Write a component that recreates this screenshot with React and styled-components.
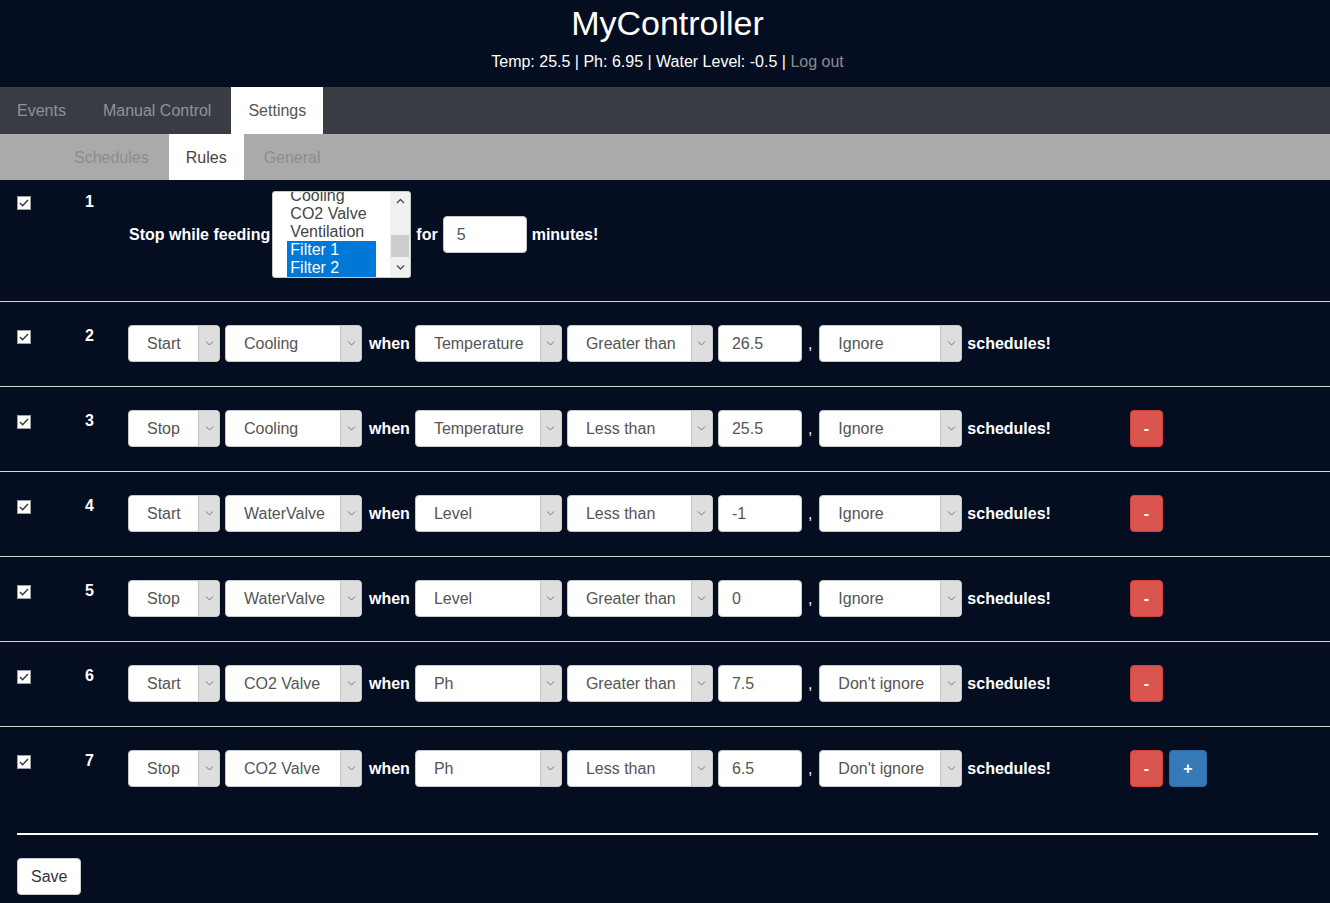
import styled, { createGlobalStyle } from "styled-components";

const GlobalStyle = createGlobalStyle`
  body {
    margin: 0;
    background: #050d21;
    font-family: "Liberation Sans", Arial, sans-serif;
    font-size: 16px;
    color: #fff;
  }
`;

const Header = styled.header`
  padding: 4px 0 14px 5px;
  text-align: center;
`;

const Title = styled.h1`
  margin: 0;
  font-size: 34px;
  font-weight: 400;
  line-height: 38px;
`;

const Status = styled.p`
  margin: 9px 0 0;
  line-height: 22px;
`;

const LogOut = styled.a`
  color: #8c8c8c;
  text-decoration: none;
`;

const NavBar = styled.nav`
  display: flex;
  gap: 3px;
  height: 47px;
  background: #393d43;
`;

const NavTab = styled.div`
  padding: 1px 17px 0;
  line-height: 46px;
  color: ${(p) => (p.$active ? "#555" : "#8f9297")};
  background: ${(p) => (p.$active ? "#fff" : "transparent")};
`;

const SubNav = styled.nav`
  display: flex;
  gap: 3px;
  height: 46px;
  padding-left: 57px;
  background: #aaaaaa;
`;

const SubTab = styled.div`
  padding: 1px 17px 0;
  line-height: 45px;
  color: ${(p) => (p.$active ? "#444" : "#8c8c8c")};
  background: ${(p) => (p.$active ? "#fff" : "transparent")};
`;

const Row = styled.div`
  display: flex;
  align-items: flex-start;
  padding: ${(p) => (p.$first ? "11px 0 23px 17px" : "23px 0 24px 17px")};
  border-top: ${(p) => (p.$first ? "none" : "1px solid #d4d4d4")};
`;

const CheckCell = styled.div`
  width: 66px;
  padding-top: 5px;
`;

const CheckBox = styled.span`
  display: flex;
  align-items: center;
  justify-content: center;
  width: 14px;
  height: 14px;
  background: #fff;
  border: 1px solid #a0a0a0;
  box-sizing: border-box;
`;

const NumCell = styled.div`
  width: 43px;
  padding: 1px 0 0 2px;
  line-height: 20px;
  font-weight: 700;
`;

const Content = styled.div`
  width: 1002px;
  display: flex;
  align-items: center;
  gap: 5px;
`;

const Label = styled.span`
  font-weight: 700;
  margin: ${(p) => p.$margin || "0"};
`;

const Comma = styled.span`
  margin: 0 2px 0 1px;
`;

const SelectBox = styled.div`
  display: flex;
  width: ${(p) => p.$width}px;
  height: 37px;
  box-sizing: border-box;
  border: 1px solid #c8c8c8;
  border-radius: 4px;
  background: #fff;
  overflow: hidden;
`;

const SelectValue = styled.span`
  flex: 1;
  padding-left: 18px;
  line-height: 36px;
  color: #555;
  white-space: nowrap;
`;

const SelectArrow = styled.span`
  display: flex;
  align-items: center;
  justify-content: center;
  width: 20px;
  background: #dedede;
  border-left: 1px solid #c4c4c4;
`;

const TextBox = styled.div`
  width: ${(p) => p.$width}px;
  height: 37px;
  box-sizing: border-box;
  padding-left: 13px;
  border: 1px solid #c8c8c8;
  border-radius: 4px;
  background: #fff;
  color: #555;
  line-height: 36px;
`;

const ListBox = styled.div`
  display: flex;
  width: 139px;
  height: 87px;
  box-sizing: border-box;
  border: 1px solid #c8c8c8;
  border-radius: 3px;
  background: #fff;
  overflow: hidden;
`;

const OptionArea = styled.div`
  flex: 1;
  padding: 0 14px 0 14px;
  overflow: hidden;
`;

const OptionList = styled.ul`
  list-style: none;
  margin: -5px 0 0;
  padding: 0;
`;

const Option = styled.li`
  padding-left: 3px;
  line-height: 18px;
  color: ${(p) => (p.$selected ? "#fff" : "#444")};
  background: ${(p) => (p.$selected ? "#0078d7" : "transparent")};
`;

const ScrollBar = styled.div`
  display: flex;
  flex-direction: column;
  width: 20px;
  background: #f0f0f0;
`;

const ScrollArrow = styled.div`
  display: flex;
  align-items: center;
  justify-content: center;
  height: 19px;
`;

const ScrollTrack = styled.div`
  flex: 1;
  display: flex;
  flex-direction: column;
  justify-content: flex-end;
`;

const ScrollThumb = styled.div`
  height: 22px;
  margin: 0 1px 1px;
  background: #cdcdcd;
`;

const ButtonCell = styled.div`
  display: flex;
  gap: 6px;
`;

const SmallButton = styled.button`
  width: ${(p) => p.$width}px;
  height: 37px;
  border: 1px solid ${(p) => (p.$kind === "add" ? "#2e6da4" : "#d43f3a")};
  border-radius: 4px;
  background: ${(p) => (p.$kind === "add" ? "#337ab7" : "#d9534f")};
  color: #fff;
  font-family: inherit;
  font-size: 16px;
  font-weight: 700;
  padding: 0;
`;

const Footer = styled.div`
  padding: 22px 12px 20px 17px;
`;

const Rule = styled.hr`
  margin: 0 0 23px;
  height: 2px;
  border: 0;
  background: #fff;
`;

const SaveButton = styled.button`
  height: 37px;
  padding: 0 13px;
  border: 1px solid #ccc;
  border-radius: 4px;
  background: #fff;
  color: #333;
  font-family: inherit;
  font-size: 16px;
`;

function Chevron({ up, down, color = "#777" }) {
  const d = up ? "M1 5 L4.5 1.5 L8 5" : "M1 1.5 L4.5 5 L8 1.5";
  return (
    <svg width="9" height="7" viewBox="0 0 9 7">
      <path d={d} fill="none" stroke={color} strokeWidth={down || up ? 1.4 : 1} />
    </svg>
  );
}

function Check() {
  return (
    <CheckBox>
      <svg width="12" height="12" viewBox="0 0 12 12">
        <path d="M2 6 L4.6 8.8 L10 3" fill="none" stroke="#333" strokeWidth="1.4" />
      </svg>
    </CheckBox>
  );
}

function Select({ width, value }) {
  return (
    <SelectBox $width={width}>
      <SelectValue>{value}</SelectValue>
      <SelectArrow>
        <Chevron />
      </SelectArrow>
    </SelectBox>
  );
}

const rules = [
  { id: 2, action: "Start", device: "Cooling", sensor: "Temperature", cmp: "Greater than", value: "26.5", ignore: "Ignore" },
  { id: 3, action: "Stop", device: "Cooling", sensor: "Temperature", cmp: "Less than", value: "25.5", ignore: "Ignore" },
  { id: 4, action: "Start", device: "WaterValve", sensor: "Level", cmp: "Less than", value: "-1", ignore: "Ignore" },
  { id: 5, action: "Stop", device: "WaterValve", sensor: "Level", cmp: "Greater than", value: "0", ignore: "Ignore" },
  { id: 6, action: "Start", device: "CO2 Valve", sensor: "Ph", cmp: "Greater than", value: "7.5", ignore: "Don't ignore" },
  { id: 7, action: "Stop", device: "CO2 Valve", sensor: "Ph", cmp: "Less than", value: "6.5", ignore: "Don't ignore" },
];

const devices = [
  { name: "Cooling" },
  { name: "CO2 Valve" },
  { name: "Ventilation" },
  { name: "Filter 1", selected: true },
  { name: "Filter 2", selected: true },
];

export default function App() {
  return (
    <>
      <GlobalStyle />
      <Header>
        <Title>MyController</Title>
        <Status>
          Temp: 25.5 | Ph: 6.95 | Water Level: -0.5 | <LogOut href="#">Log out</LogOut>
        </Status>
      </Header>
      <NavBar>
        <NavTab>Events</NavTab>
        <NavTab>Manual Control</NavTab>
        <NavTab $active>Settings</NavTab>
      </NavBar>
      <SubNav>
        <SubTab>Schedules</SubTab>
        <SubTab $active>Rules</SubTab>
        <SubTab>General</SubTab>
      </SubNav>

      <Row $first>
        <CheckCell>
          <Check />
        </CheckCell>
        <NumCell>1</NumCell>
        <Content>
          <Label $margin="0 -3px 0 1px">Stop while feeding</Label>
          <ListBox>
            <OptionArea>
              <OptionList>
                {devices.map((d) => (
                  <Option key={d.name} $selected={d.selected}>
                    {d.name}
                  </Option>
                ))}
              </OptionList>
            </OptionArea>
            <ScrollBar>
              <ScrollArrow>
                <Chevron up color="#505050" />
              </ScrollArrow>
              <ScrollTrack>
                <ScrollThumb />
              </ScrollTrack>
              <ScrollArrow>
                <Chevron down color="#505050" />
              </ScrollArrow>
            </ScrollBar>
          </ListBox>
          <Label>for</Label>
          <TextBox $width={84}>5</TextBox>
          <Label>minutes!</Label>
        </Content>
      </Row>

      {rules.map((r) => (
        <Row key={r.id}>
          <CheckCell>
            <Check />
          </CheckCell>
          <NumCell>{r.id}</NumCell>
          <Content>
            <Select width={92} value={r.action} />
            <Select width={137} value={r.device} />
            <Label $margin="0 0 0 2px">when</Label>
            <Select width={147} value={r.sensor} />
            <Select width={146} value={r.cmp} />
            <TextBox $width={84}>{r.value}</TextBox>
            <Comma>,</Comma>
            <Select width={143} value={r.ignore} />
            <Label>schedules!</Label>
          </Content>
          <ButtonCell>
            {r.id > 2 && <SmallButton $width={33}>-</SmallButton>}
            {r.id === 7 && (
              <SmallButton $kind="add" $width={38}>
                +
              </SmallButton>
            )}
          </ButtonCell>
        </Row>
      ))}

      <Footer>
        <Rule />
        <SaveButton>Save</SaveButton>
      </Footer>
    </>
  );
}
